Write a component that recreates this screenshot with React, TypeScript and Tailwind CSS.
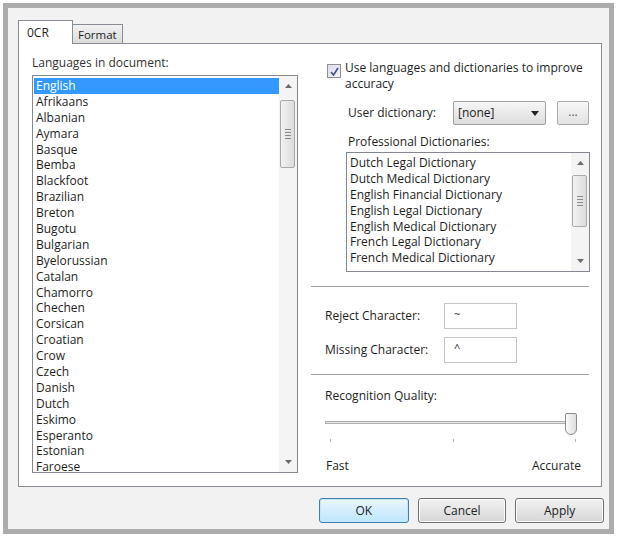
const languages = [
  "English",
  "Afrikaans",
  "Albanian",
  "Aymara",
  "Basque",
  "Bemba",
  "Blackfoot",
  "Brazilian",
  "Breton",
  "Bugotu",
  "Bulgarian",
  "Byelorussian",
  "Catalan",
  "Chamorro",
  "Chechen",
  "Corsican",
  "Croatian",
  "Crow",
  "Czech",
  "Danish",
  "Dutch",
  "Eskimo",
  "Esperanto",
  "Estonian",
  "Faroese",
];

const dictionaries = [
  "Dutch Legal Dictionary",
  "Dutch Medical Dictionary",
  "English Financial Dictionary",
  "English Legal Dictionary",
  "English Medical Dictionary",
  "French Legal Dictionary",
  "French Medical Dictionary",
];

const Arrow = ({ down }: { down?: boolean }) => (
  <svg width="7" height="4" viewBox="0 0 7 4" className="text-[#6b6b6b]">
    <path d={down ? "M0 0h7L3.5 4z" : "M0 4h7L3.5 0z"} fill="currentColor" />
  </svg>
);

const Scrollbar = ({ thumbTop, thumbHeight }: { thumbTop: number; thumbHeight: number }) => (
  <div className="relative flex w-[18px] shrink-0 flex-col items-center justify-between bg-[#f4f4f4] py-[8px]">
    <Arrow />
    <div
      className="absolute left-[1px] right-[2px] flex items-center justify-center rounded-[2px] border border-[#a9a9a9] bg-gradient-to-r from-[#f2f2f2] to-[#dcdcdc]"
      style={{ top: thumbTop, height: thumbHeight }}
    >
      <div className="flex flex-col gap-[2px]">
        <span className="block h-px w-[6px] bg-[#8a8a8a]" />
        <span className="block h-px w-[6px] bg-[#8a8a8a]" />
        <span className="block h-px w-[6px] bg-[#8a8a8a]" />
        <span className="block h-px w-[6px] bg-[#8a8a8a]" />
      </div>
    </div>
    <Arrow down />
  </div>
);

const Button = ({ label, primary }: { label: string; primary?: boolean }) => (
  <button
    className={`flex h-[25px] items-center justify-center rounded-[3px] border text-[12px] text-[#222] ${
      primary
        ? "w-[90px] border-[#3c7fb1] bg-gradient-to-b from-[#eaf6fd] to-[#bee6fd] shadow-[inset_0_0_0_1px_#c5e6f8]"
        : "w-[89px] border-[#707070] bg-gradient-to-b from-[#f2f2f2] to-[#d6d6d6] shadow-[inset_0_0_0_1px_#fcfcfc]"
    }`}
  >
    {label}
  </button>
);

export default function App() {
  return (
    <div
      className="h-[540px] w-[618px] bg-white pl-[3px] pt-[3px] text-[12px] text-[#1e1e1e]"
      style={{ fontFamily: '"Open Sans", "Noto Sans", sans-serif' }}
    >
      <div className="flex h-[531px] w-[611px] flex-col border-[5px] border-[#acacac] bg-[#f2f2f2] pl-[10px] pr-[5px] pt-[12px]">
        {/* tabs */}
        <div className="flex h-[23px] items-end">
          <div className="relative z-10 -mb-px flex h-[24px] w-[55px] items-start border border-b-0 border-[#898c95] bg-white pl-[8px] pt-[3px]">
            0CR
          </div>
          <div className="flex h-[19px] w-[50px] items-start border border-l-0 border-b-0 border-[#898c95] bg-gradient-to-b from-[#f2f2f2] to-[#dcdcdc] pl-[5px] pt-[1px] text-[11.5px]">
            Format
          </div>
        </div>

        {/* panel */}
        <div className="flex h-[444px] w-[584px] border border-[#898c95] bg-white">
          {/* left column */}
          <div className="flex w-[280px] flex-col pl-[13px] pt-[11px]">
            <div className="h-[16px] leading-[16px] text-[#333]">Languages in document:</div>
            <div className="mt-[4px] flex h-[398px] w-[266px] border border-[#828790] bg-white">
              <div className="flex-1 overflow-hidden pl-px pt-[2px]">
                {languages.map((l, i) => (
                  <div
                    key={l}
                    className={`h-[15.9px] pl-[2px] leading-[16px] ${
                      i === 0 ? "bg-[#3399ff] text-white" : ""
                    }`}
                  >
                    {l}
                  </div>
                ))}
              </div>
              <Scrollbar thumbTop={24} thumbHeight={68} />
            </div>
          </div>

          {/* right column */}
          <div className="flex flex-1 flex-col pl-[13px] pr-[11px] pt-[16px]">
            <div className="flex items-start pl-[15px]">
              <div className="mt-[4px] flex h-[14px] w-[14px] shrink-0 items-center justify-center border border-[#8f8f8f] bg-gradient-to-br from-[#dcdcec] to-[#f4f4fa]">
                <svg width="9" height="9" viewBox="0 0 9 9">
                  <path d="M1 5l2.5 3L8 1" fill="none" stroke="#4a4f8a" strokeWidth="1.6" />
                </svg>
              </div>
              <div className="ml-[4px] leading-[16px]">
                Use languages and dictionaries to improve
                <br />
                accuracy
              </div>
            </div>

            <div className="mt-[9px] flex items-center pl-[36px]">
              <span className="w-[105px]">User dictionary:</span>
              <div className="flex h-[24px] w-[93px] items-center justify-between rounded-[2px] border border-[#a0a0a0] bg-gradient-to-b from-[#f6f6f6] to-[#dddddd] pl-[4px] pr-[6px]">
                <span>[none]</span>
                <svg width="8" height="5" viewBox="0 0 8 5">
                  <path d="M0 0h8L4 5z" fill="#222" />
                </svg>
              </div>
              <div className="ml-[11px] flex h-[24px] w-[32px] items-center justify-center rounded-[2px] border border-[#a9a9a9] bg-gradient-to-b from-[#f8f8f8] to-[#e2e2e2] pb-[3px] text-[#555]">
                ...
              </div>
            </div>

            <div className="mt-[9px] pl-[36px] leading-[16px]">Professional Dictionaries:</div>
            <div className="ml-[34px] mt-[2px] flex h-[120px] w-[244px] border border-[#828790] bg-white">
              <div className="flex-1 overflow-hidden pl-[3px] pt-[2px]">
                {dictionaries.map((d) => (
                  <div key={d} className="h-[15.9px] leading-[16px]">
                    {d}
                  </div>
                ))}
              </div>
              <Scrollbar thumbTop={22} thumbHeight={52} />
            </div>

            <div className="-ml-[1px] mt-[14px] h-px w-[278px] bg-[#a0a0a0]" />

            <div className="mt-[16px] flex items-center pl-[13px]">
              <span className="w-[119px]">Reject Character:</span>
              <div className="h-[26px] w-[73px] border border-[#c5c5c5] bg-white pl-[9px] pt-[2px] text-[11px]">~</div>
            </div>
            <div className="mt-[8px] flex items-center pl-[13px]">
              <span className="w-[119px]">Missing Character:</span>
              <div className="h-[26px] w-[73px] border border-[#c5c5c5] bg-white pl-[9px] pt-[2px] text-[11px]">^</div>
            </div>

            <div className="-ml-[1px] mt-[11px] h-px w-[278px] bg-[#a0a0a0]" />

            <div className="mt-[13px] pl-[13px] leading-[16px]">Recognition Quality:</div>

            <div className="relative ml-[13px] mt-[9px] h-[24px] w-[254px]">
              <div className="absolute left-0 right-[2px] top-[8px] h-[3px] border border-[#b0b0b0] bg-[#e6e6e6]" />
              <div className="absolute right-[2px] top-0 h-[22px] w-[12px] rounded-b-[6px] rounded-t-[2px] border border-[#8a8a8a] bg-gradient-to-r from-[#fafafa] to-[#dedede]" />
            </div>
            <div className="ml-[18px] mt-[2px] flex w-[246px] justify-between">
              <span className="h-[3px] w-px bg-[#b5b5b5]" />
              <span className="h-[3px] w-px bg-[#b5b5b5]" />
              <span className="h-[3px] w-px bg-[#b5b5b5]" />
            </div>
            <div className="ml-[14px] mt-[16px] flex w-[255px] justify-between leading-[16px]">
              <span>Fast</span>
              <span>Accurate</span>
            </div>
          </div>
        </div>

        {/* buttons */}
        <div className="mt-[11px] flex gap-[9px] pl-[301px]">
          <Button label="OK" primary />
          <Button label="Cancel" />
          <Button label="Apply" />
        </div>
      </div>
    </div>
  );
}
